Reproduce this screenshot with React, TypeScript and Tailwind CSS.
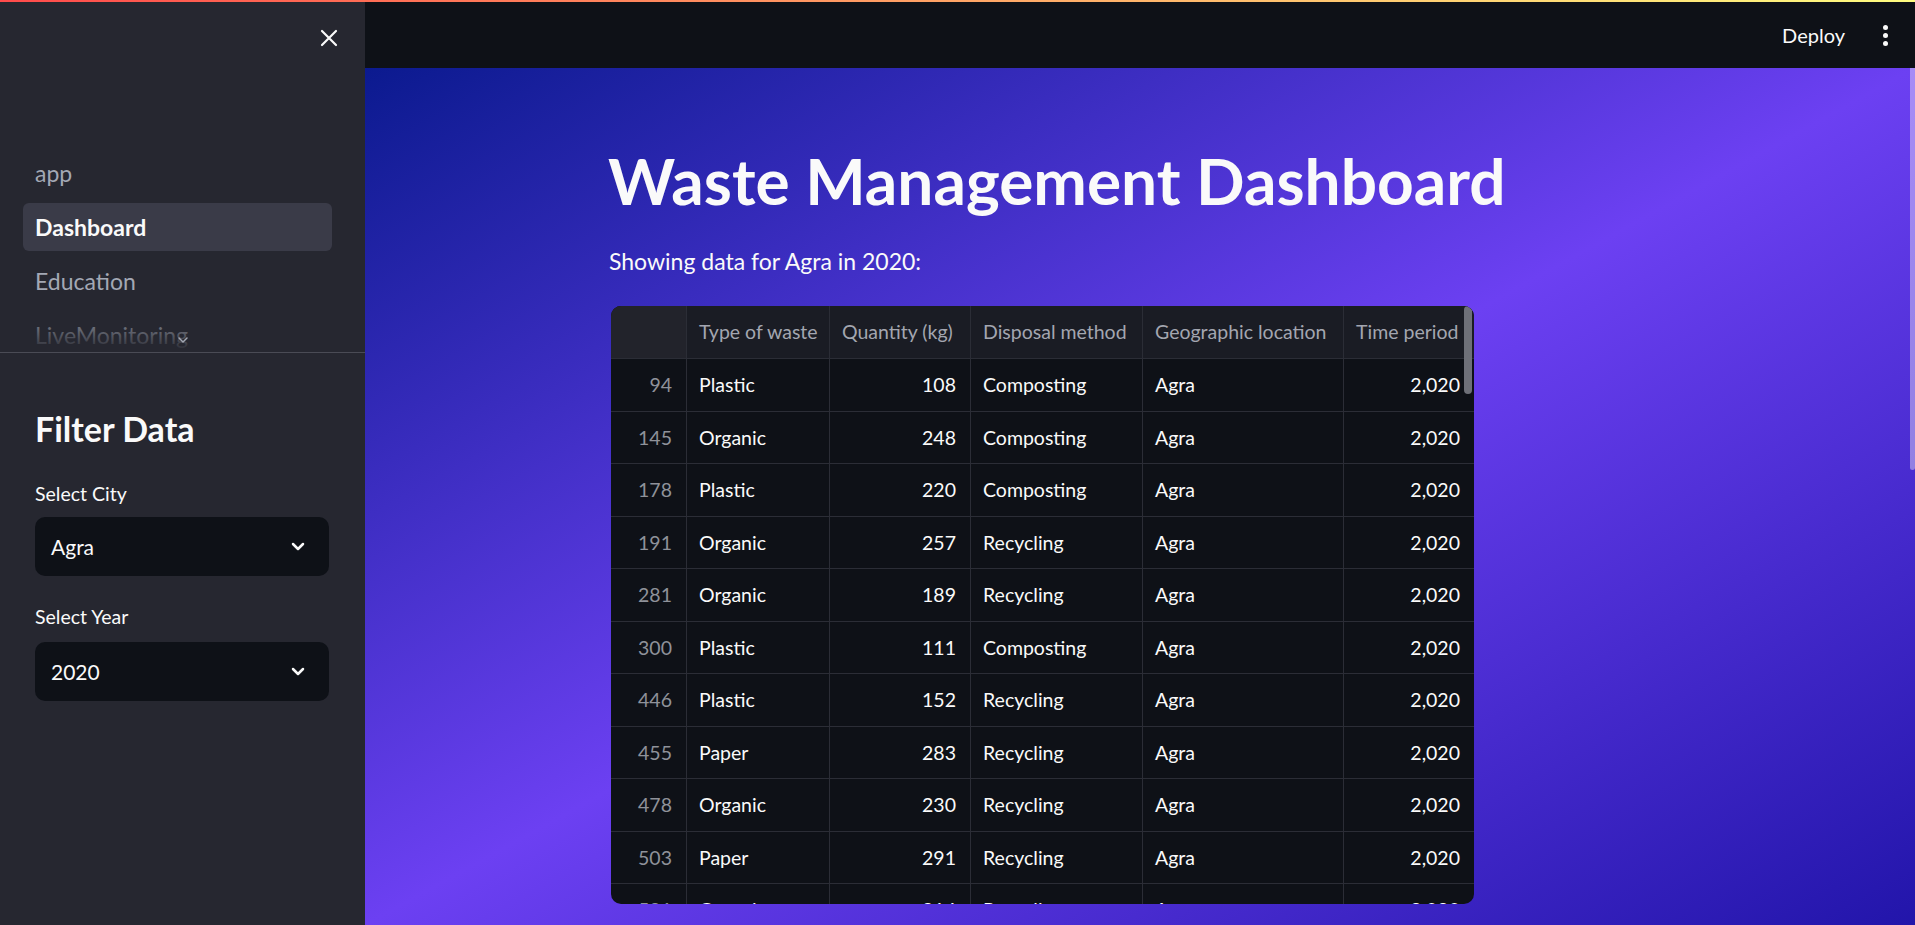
import React from "react";

const rows: string[][] = [
  ["94", "Plastic", "108", "Composting"],
  ["145", "Organic", "248", "Composting"],
  ["178", "Plastic", "220", "Composting"],
  ["191", "Organic", "257", "Recycling"],
  ["281", "Organic", "189", "Recycling"],
  ["300", "Plastic", "111", "Composting"],
  ["446", "Plastic", "152", "Recycling"],
  ["455", "Paper", "283", "Recycling"],
  ["478", "Organic", "230", "Recycling"],
  ["503", "Paper", "291", "Recycling"],
  ["521", "Organic", "214", "Recycling"],
];

const headers = ["Type of waste", "Quantity (kg)", "Disposal method", "Geographic location", "Time period"];

function Chevron() {
  return (
    <svg width="14" height="9" viewBox="0 0 14 9" fill="none">
      <polyline points="2,2 7,7 12,2" stroke="#fafafa" strokeWidth="2.5" strokeLinecap="round" strokeLinejoin="round" />
    </svg>
  );
}

function Select({ value }: { value: string }) {
  return (
    <div className="flex items-center justify-between w-[294px] h-[59px] rounded-[10px] bg-[#0e1117] pl-[16px] pr-[24px]">
      <span className="text-[21px] text-[#fafafa]">{value}</span>
      <Chevron />
    </div>
  );
}

export default function App() {
  return (
    <div className="w-[1915px] h-[925px] overflow-hidden flex flex-col bg-[#0e1117] font-['Lato',sans-serif]">
      <div className="h-[2px] w-full bg-[linear-gradient(90deg,#ff4b4b,#fffd80)] shrink-0" />
      <div className="flex flex-1 min-h-0">
        {/* Sidebar */}
        <aside className="w-[365px] shrink-0 bg-[#262730] flex flex-col">
          <div className="h-[72px] flex justify-end items-start pt-[27px] pr-[27px]">
            <svg width="18" height="18" viewBox="0 0 18 18" fill="none">
              <path d="M2 2L16 16M16 2L2 16" stroke="#fafafa" strokeWidth="2.2" strokeLinecap="round" />
            </svg>
          </div>
          <div className="relative h-[279px] overflow-hidden border-b border-[#4a4b55] pt-[75px] pl-[23px] pr-[33px]">
            <div className="flex flex-col gap-[6px]">
              <div className="h-[48px] flex items-center pl-[12px] text-[23px] text-[#a3a8b4]">app</div>
              <div className="h-[48px] flex items-center pl-[12px] text-[23px] font-bold text-[#fafafa] bg-[#3a3b48] rounded-[6px]">Dashboard</div>
              <div className="h-[48px] flex items-center pl-[12px] text-[23px] text-[#a3a8b4]">Education</div>
              <div className="h-[48px] flex items-center pl-[12px] text-[23px] text-[#a3a8b4]">LiveMonitoring</div>
            </div>
            <div className="absolute left-0 right-0 bottom-0 h-[45px] bg-[linear-gradient(to_bottom,rgba(38,39,48,0),#262730)]" />
            <svg className="absolute left-[177px] top-[262px]" width="12" height="8" viewBox="0 0 12 8" fill="none">
              <polyline points="2,2 6,6 10,2" stroke="#a3a8b4" strokeWidth="1.5" strokeLinecap="round" strokeLinejoin="round" />
            </svg>
          </div>
          <div className="pl-[35px] pt-[50px]">
            <div className="h-[50px] flex items-center text-[34px] font-bold text-[#fafafa]">Filter Data</div>
            <div className="mt-[28px] h-[26px] flex items-center text-[19.5px] text-[#fafafa]">Select City</div>
            <div className="mt-[10px]">
              <Select value="Agra" />
            </div>
            <div className="mt-[28px] h-[26px] flex items-center text-[19.5px] text-[#fafafa]">Select Year</div>
            <div className="mt-[12px]">
              <Select value="2020" />
            </div>
          </div>
        </aside>

        {/* Right column */}
        <div className="flex-1 flex flex-col min-w-0">
          <header className="h-[66px] shrink-0 bg-[#0e1117] flex items-center justify-end pr-[27px] gap-[38px]">
            <span className="text-[20px] text-[#fafafa]">Deploy</span>
            <div className="flex flex-col items-center gap-[3px]">
              <div className="w-[5px] h-[5px] rounded-full bg-[#fafafa]" />
              <div className="w-[5px] h-[5px] rounded-full bg-[#fafafa]" />
              <div className="w-[5px] h-[5px] rounded-full bg-[#fafafa]" />
            </div>
          </header>
          <main className="relative flex-1 overflow-hidden bg-[linear-gradient(to_bottom_right,#0b1a8f,#6c40f2,#2215aa)] pl-[243px] pt-[75px]">
            <div className="absolute right-0 top-0 w-[5px] h-[402px] rounded-b-[3px] bg-[rgba(255,255,255,0.4)]" />
            <h1 className="text-[64px] leading-[76px] font-bold text-[#fafafa] whitespace-nowrap">Waste Management Dashboard</h1>
            <p className="mt-[27px] text-[23px] leading-[30px] text-[#fafafa] pl-[1px]">Showing data for Agra in 2020:</p>
            <div className="mt-[30px] ml-[3px] relative w-[863px] h-[598px] rounded-[10px] overflow-hidden bg-[#0e1117]">
              <div className="grid grid-cols-[76px_143px_141px_172px_201px_130px] h-[53px] bg-[#1a1c24] text-[19.5px] text-[#a3a6b0]">
                <div className="border-r border-b border-[#2b2d36] bg-[#22232b]" />
                {headers.map((h, i) => (
                  <div key={h} className={`flex items-center px-[12px] border-b border-[#2b2d36] whitespace-nowrap overflow-hidden ${i < 4 ? "border-r" : ""}`}>
                    {h}
                  </div>
                ))}
              </div>
              {rows.map((r) => (
                <div key={r[0]} className="grid grid-cols-[76px_143px_141px_172px_201px_130px] h-[52.5px] text-[19.5px] text-[#fafafa]">
                  <div className="flex items-center justify-end pr-[14px] border-r border-b border-[#2b2d36] text-[#8f929a]">{r[0]}</div>
                  <div className="flex items-center px-[12px] border-r border-b border-[#2b2d36]">{r[1]}</div>
                  <div className="flex items-center justify-end pr-[14px] border-r border-b border-[#2b2d36]">{r[2]}</div>
                  <div className="flex items-center px-[12px] border-r border-b border-[#2b2d36]">{r[3]}</div>
                  <div className="flex items-center px-[12px] border-r border-b border-[#2b2d36]">Agra</div>
                  <div className="flex items-center justify-end pr-[14px] border-b border-[#2b2d36]">2,020</div>
                </div>
              ))}
              <div className="absolute right-[2px] top-0 w-[8px] h-[88px] rounded-[4px] bg-[#6e7078]" />
            </div>
          </main>
        </div>
      </div>
    </div>
  );
}
